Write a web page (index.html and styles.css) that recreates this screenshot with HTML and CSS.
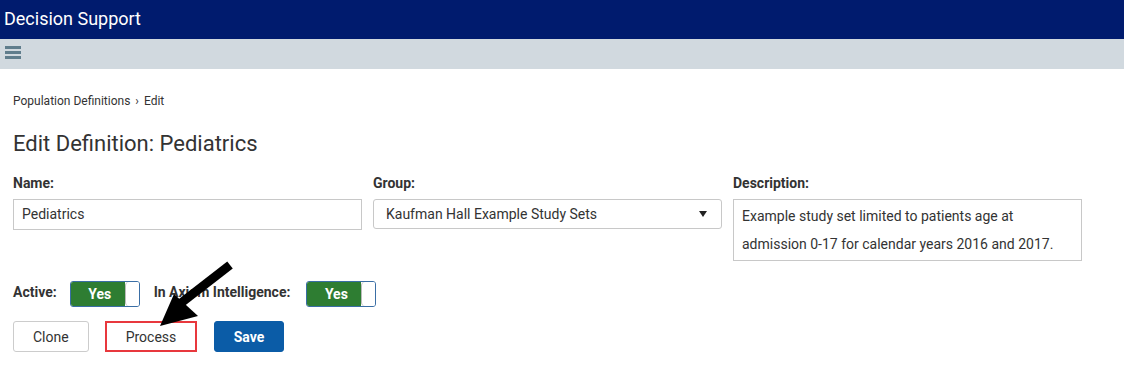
FILE: index.html
```html
<!DOCTYPE html>
<html lang="en">
<head>
    <meta charset="UTF-8">
    <title>Decision Support - Edit Definition</title>
    <link rel="stylesheet" href="styles.css">
</head>
<body>
    <div class="app-header">Decision Support</div>
    <div class="toolbar">
        <svg class="menu-icon" width="16" height="13" viewBox="0 0 16 13">
            <rect x="0" y="0" width="16" height="3" fill="#5f7d8c"/>
            <rect x="0" y="5" width="16" height="3" fill="#5f7d8c"/>
            <rect x="0" y="10" width="16" height="3" fill="#5f7d8c"/>
        </svg>
    </div>

    <div class="page">
        <div class="breadcrumb">Population Definitions <span class="sep">›</span> Edit</div>
        <h1>Edit Definition: Pediatrics</h1>

        <div class="fields">
            <div class="field">
                <label>Name:</label>
                <div class="input">Pediatrics</div>
            </div>
            <div class="field">
                <label>Group:</label>
                <div class="input select">
                    <span>Kaufman Hall Example Study Sets</span>
                    <span class="caret"></span>
                </div>
            </div>
            <div class="field">
                <label>Description:</label>
                <div class="input textarea">Example study set limited to patients age at admission 0-17 for calendar years 2016 and 2017.</div>
            </div>
        </div>

        <div class="switches">
            <span class="switch-label">Active:</span>
            <div class="toggle"><span class="on">Yes</span><span class="knob"></span></div>
            <span class="switch-label second">In Axiom Intelligence:</span>
            <div class="toggle wide-gap"><span class="on">Yes</span><span class="knob"></span></div>
        </div>

        <div class="actions">
            <button class="btn">Clone</button>
            <button class="btn highlight">Process</button>
            <button class="btn primary">Save</button>
        </div>

        <!-- callout arrow pointing at Process -->
        <svg class="callout" width="90" height="75" viewBox="0 0 90 75">
            <line x1="85" y1="6" x2="36" y2="44" stroke="#000" stroke-width="9"/>
            <polygon points="15,67 29,35 53,57" fill="#000"/>
        </svg>
    </div>
</body>
</html>
```

FILE: styles.css
```css
* {
    margin: 0;
    padding: 0;
    box-sizing: border-box;
}

body {
    font-family: 'Roboto', 'Liberation Sans', sans-serif;
    color: #333;
    background: #fff;
}

.app-header {
    background: #001b6e;
    color: #fff;
    height: 39px;
    line-height: 37px;
    padding-left: 4px;
    font-size: 18px;
}

.toolbar {
    background: #d1d9df;
    height: 30px;
    padding: 7px 0 0 5px;
}

.menu-icon {
    display: block;
}

.page {
    position: relative;
    padding: 24px 13px 0 13px;
}

.breadcrumb {
    font-size: 12px;
    line-height: 16px;
    color: #333;
}

.breadcrumb .sep {
    margin: 0 2px;
}

h1 {
    font-size: 22px;
    font-weight: normal;
    margin-top: 20px;
    line-height: 30px;
    color: #333;
}

.fields {
    display: grid;
    grid-template-columns: 349px 349px 349px;
    column-gap: 11px;
    margin-top: 16px;
}

.field label {
    display: block;
    font-size: 14px;
    font-weight: bold;
    line-height: 17px;
    margin-bottom: 7px;
}

.input {
    border: 1px solid #c8c8c8;
    height: 31px;
    line-height: 29px;
    padding: 0 8px;
    font-size: 14px;
    color: #333;
}

.select {
    border-radius: 3px;
    height: 30px;
    padding: 0 12px;
    display: flex;
    justify-content: space-between;
    align-items: center;
}

.caret {
    width: 0;
    height: 0;
    border-left: 4px solid transparent;
    border-right: 4px solid transparent;
    border-top: 6px solid #222;
    margin-right: 2px;
}

.textarea {
    height: 62px;
    line-height: 28px;
    padding: 2px 8px;
}

.switches {
    display: flex;
    align-items: center;
    margin-top: 19px;
    height: 27px;
}

.switch-label {
    font-size: 14px;
    font-weight: bold;
    margin-top: -4px;
}

.switch-label.second {
    margin-left: 14px;
}

.toggle {
    display: flex;
    width: 70px;
    height: 26px;
    border: 1px solid #3a6ea5;
    border-radius: 3px;
    overflow: hidden;
    margin-left: 13px;
}

.toggle.wide-gap {
    margin-left: 16px;
}

.toggle .on {
    flex: 1;
    background: #2e7d32;
    color: #fff;
    font-weight: bold;
    font-size: 14px;
    text-align: center;
    line-height: 24px;
    padding-left: 4px;
}

.toggle .knob {
    width: 14px;
    background: #fff;
    border-left: 1px solid #bbb;
    border-radius: 4px 0 0 4px;
}

.actions {
    display: flex;
    gap: 16px;
    margin-top: 14px;
}

.btn {
    font-family: inherit;
    font-size: 14px;
    height: 31px;
    padding: 0 19px;
    background: #fff;
    color: #333;
    border: 1px solid #ccc;
    border-radius: 3px;
    cursor: pointer;
}

.btn.highlight {
    width: 92px;
    border: 2px solid #e8383d;
    border-radius: 0;
}

.btn.primary {
    width: 70px;
    margin-left: 1px;
    background: #0b5ca7;
    border-color: #0b5ca7;
    color: #fff;
    font-weight: bold;
}

.callout {
    position: absolute;
    left: 145px;
    top: 190px;
}
```
